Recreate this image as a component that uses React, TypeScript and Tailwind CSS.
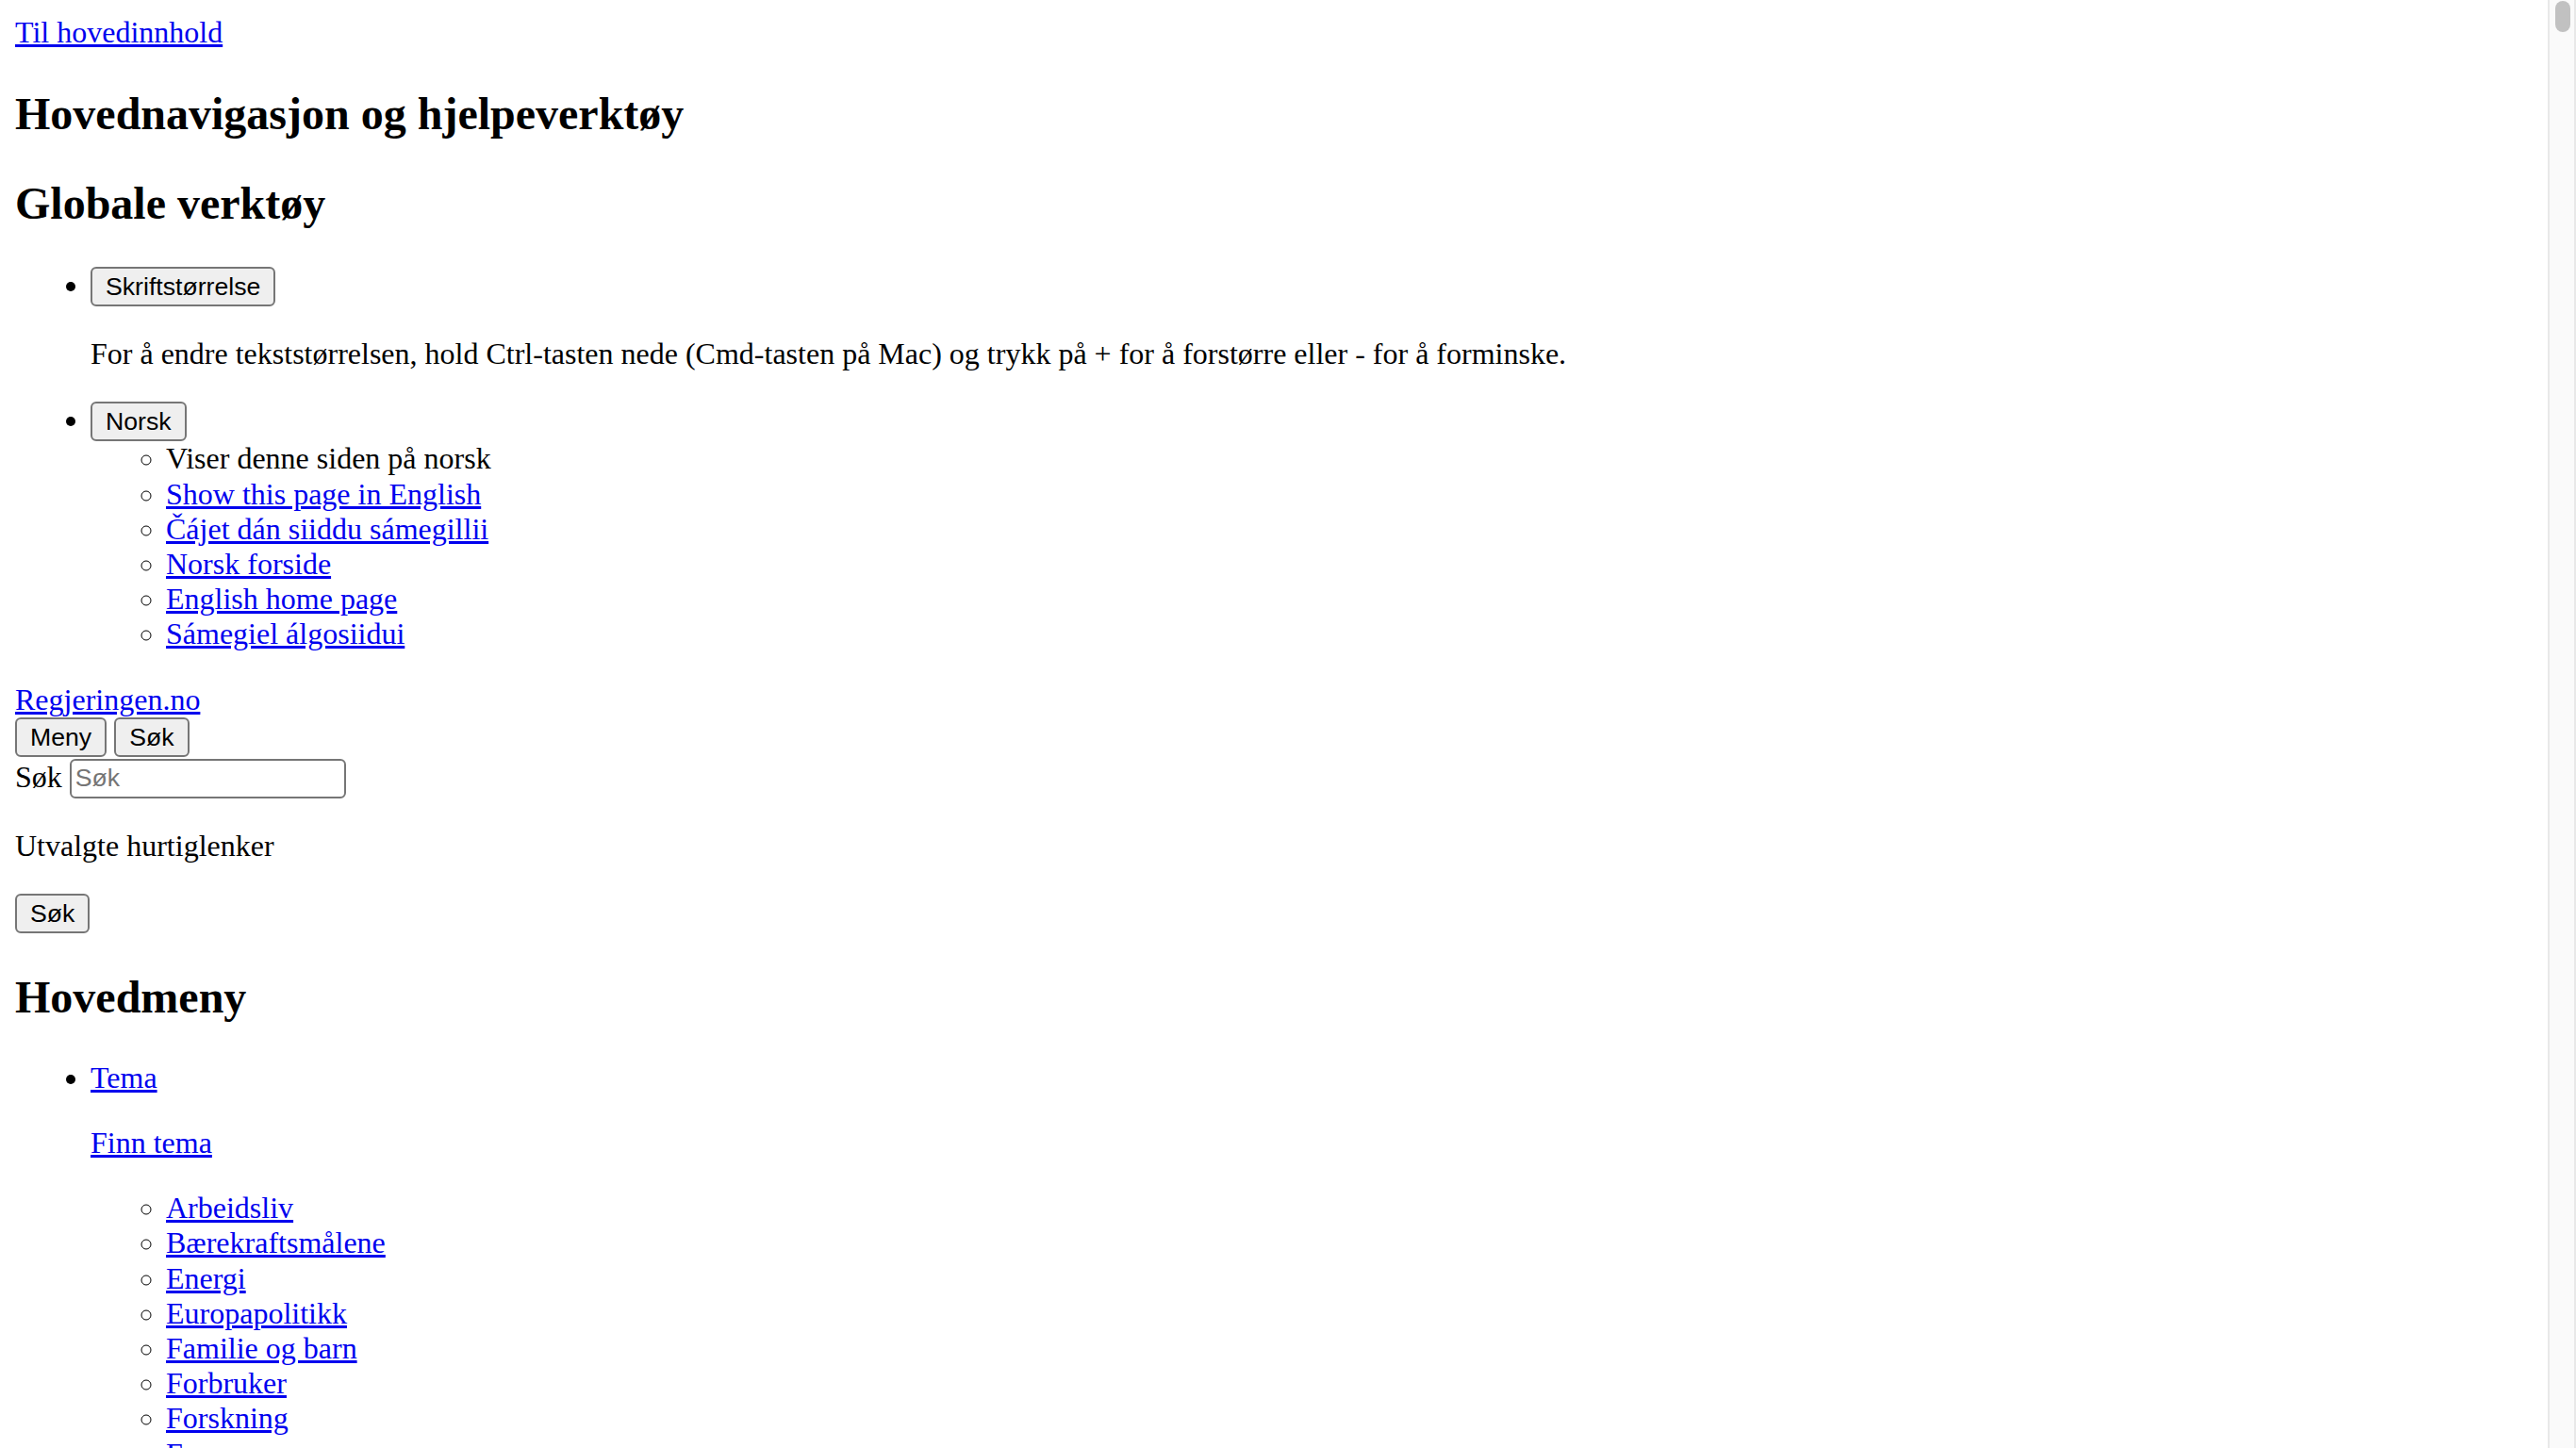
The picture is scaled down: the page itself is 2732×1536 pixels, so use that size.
const btn =
  "inline-block h-[42px] rounded-[6px] border-2 border-[#767676] bg-[#efefef] px-[14px] align-baseline font-['Liberation_Sans',Arial,sans-serif] text-[26.67px] leading-[38px] text-black";
const link = "text-[#0000ee] underline";
const h2 = "my-[39.84px] text-[48px] font-bold leading-[55.2px]";

const languages = [
  "Show this page in English",
  "Čájet dán siiddu sámegillii",
  "Norsk forside",
  "English home page",
  "Sámegiel álgosiidui",
];

const topics = [
  "Arbeidsliv",
  "Bærekraftsmålene",
  "Energi",
  "Europapolitikk",
  "Familie og barn",
  "Forbruker",
  "Forskning",
  "Forsvar",
  "Helse og omsorg",
  "Innvandring og integrering",
];

function Scrollbar() {
  return (
    <div className="h-full w-[30px] shrink-0 border-x-2 border-[#e8e8e8] bg-[#fafafa] pl-[6px] pt-[1px]">
      <div className="h-[33px] w-[16px] rounded-full bg-[#c1c1c1]" />
    </div>
  );
}

export default function App() {
  return (
    <div className="flex h-screen overflow-hidden bg-white">
      <div className="flex-1 overflow-hidden p-[16px] font-['Liberation_Serif',serif] text-[32px] leading-[37.2px] text-black">
        <div>
          <a href="#main" className={link}>
            Til hovedinnhold
          </a>
        </div>

        <h2 className={h2}>Hovednavigasjon og hjelpeverktøy</h2>
        <h2 className={h2}>Globale verktøy</h2>

        <ul className="my-[32px] list-disc pl-[80px]">
          <li>
            <button className={btn}>Skriftstørrelse</button>
            <p className="my-[32px]">
              For å endre tekststørrelsen, hold Ctrl-tasten nede (Cmd-tasten på Mac) og trykk på + for å forstørre eller - for å forminske.
            </p>
          </li>
          <li>
            <button className={btn}>Norsk</button>
            <ul className="list-[circle] pl-[80px]">
              <li>Viser denne siden på norsk</li>
              {languages.map((l) => (
                <li key={l}>
                  <a href="#" className={link}>
                    {l}
                  </a>
                </li>
              ))}
            </ul>
          </li>
        </ul>

        <div>
          <a href="#" className={link}>
            Regjeringen.no
          </a>
        </div>
        <div className="pb-[2px]">
          <button className={btn}>Meny</button> <button className={btn}>Søk</button>
        </div>
        <div>
          <label htmlFor="q">Søk</label>{" "}
          <input
            id="q"
            placeholder="Søk"
            className="h-[42px] w-[293px] rounded-[6px] border-2 border-[#767676] bg-white px-[4px] align-baseline font-['Liberation_Sans',Arial,sans-serif] text-[26.67px] text-black placeholder:text-[#757575]"
          />
        </div>
        <p className="my-[32px]">Utvalgte hurtiglenker</p>
        <div>
          <button className={btn}>Søk</button>
        </div>

        <h2 className={h2}>Hovedmeny</h2>
        <ul className="my-[32px] list-disc pl-[80px]">
          <li>
            <a href="#" className={link}>
              Tema
            </a>
            <p className="my-[32px]">
              <a href="#" className={link}>
                Finn tema
              </a>
            </p>
            <ul className="list-[circle] pl-[80px]">
              {topics.map((t) => (
                <li key={t}>
                  <a href="#" className={link}>
                    {t}
                  </a>
                </li>
              ))}
            </ul>
          </li>
        </ul>
      </div>
      <Scrollbar />
    </div>
  );
}
